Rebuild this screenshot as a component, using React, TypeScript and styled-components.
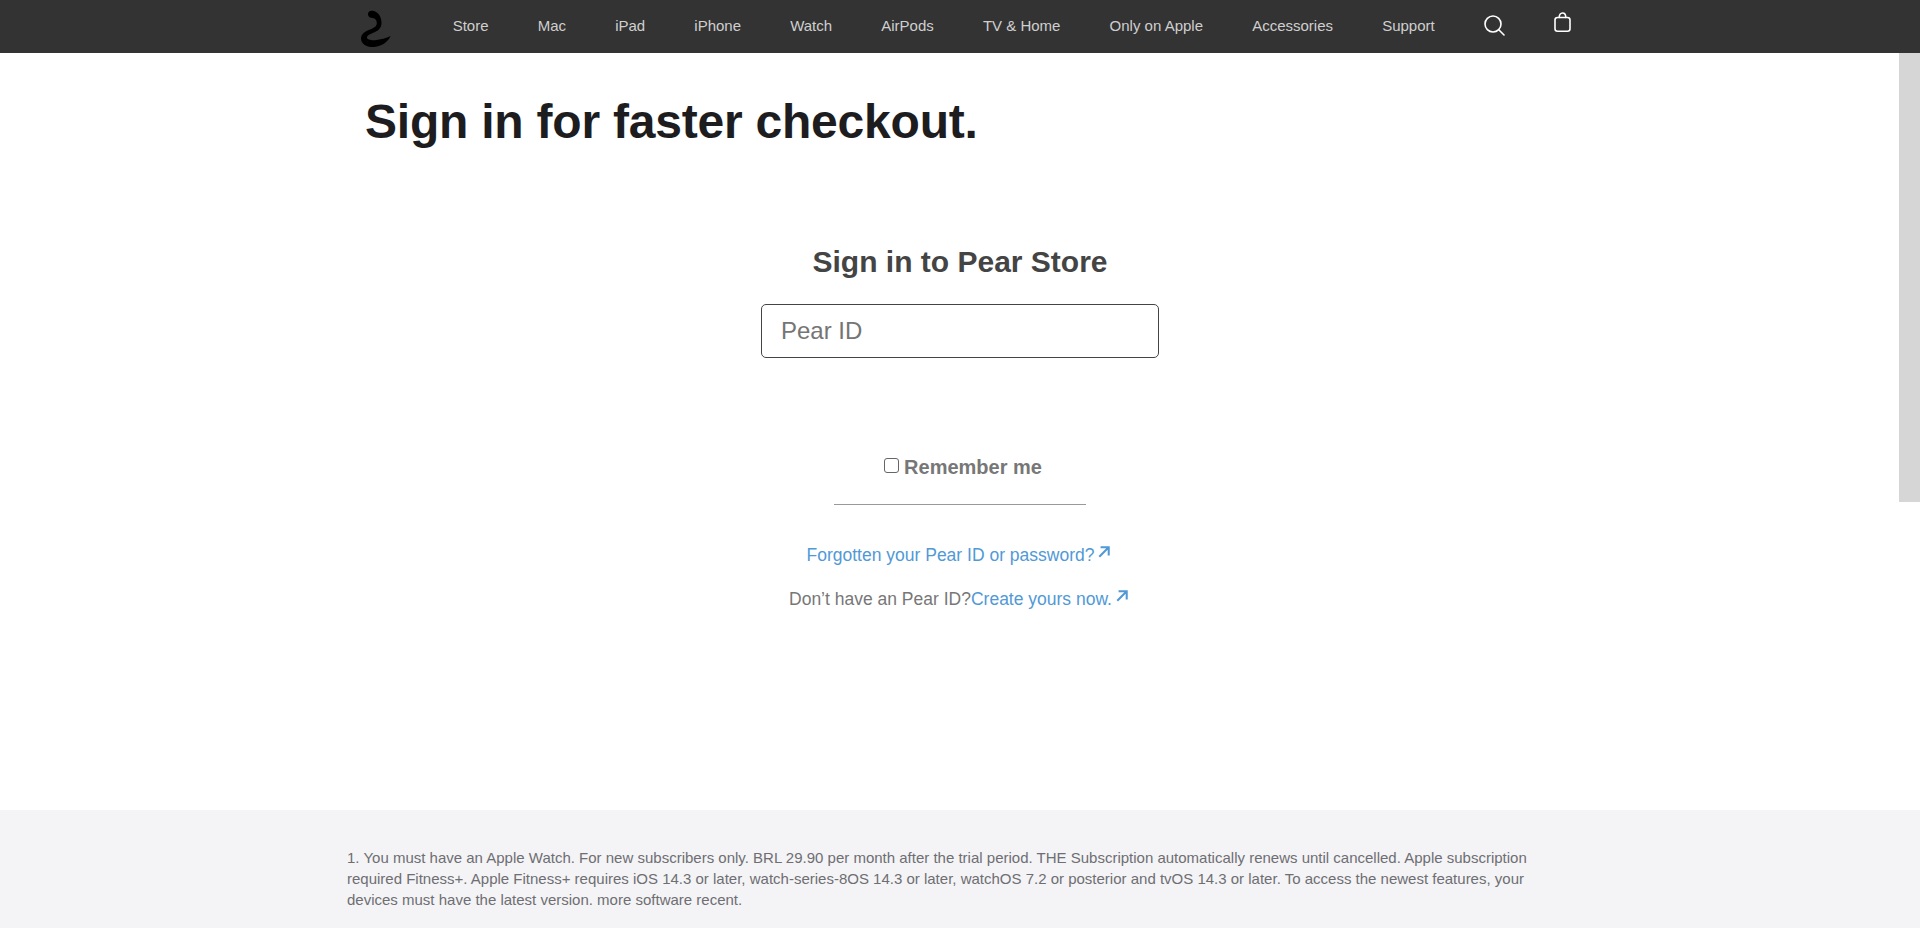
import styled, { createGlobalStyle } from "styled-components";

const links = [
  "Store",
  "Mac",
  "iPad",
  "iPhone",
  "Watch",
  "AirPods",
  "TV & Home",
  "Only on Apple",
  "Accessories",
  "Support",
];

const GlobalStyle = createGlobalStyle`
  html, body {
    margin: 0;
    height: 100%;
    overflow: hidden;
    background: #fff;
    font-family: "Liberation Sans", Arial, sans-serif;
  }
  * {
    box-sizing: border-box;
  }
`;

const Page = styled.div`
  position: relative;
  display: flex;
  flex-direction: column;
  height: 928px;
`;

const NavBar = styled.header`
  flex: none;
  height: 53px;
  padding-left: 360px;
  background: #333333;
`;

const NavList = styled.nav`
  display: flex;
  align-items: center;
  gap: 49.15px;
  height: 100%;
`;

const Logo = styled.svg`
  width: 32px;
  height: 40px;
  margin: 7px 11.500px 0 0;
  flex: none;
`;

const NavLink = styled.a`
  margin-top: -2px;
  font-size: 15px;
  color: #cfcfcf;
  white-space: nowrap;
`;

const NavIcon = styled.svg<{ $up: number }>`
  flex: none;
  margin-top: -${(p) => p.$up}px;
  fill: none;
  stroke: #fff;
  stroke-width: 1.6;
  stroke-linecap: round;
`;

const Scrollbar = styled.div`
  position: absolute;
  top: 53px;
  right: 0;
  width: 21px;
  height: 449px;
  background: #d6d6d6;
`;

const Main = styled.main`
  flex: 1;
  display: flex;
  flex-direction: column;
`;

const Headline = styled.h1`
  margin: 40px 0 0 365px;
  font-size: 48px;
  line-height: 58px;
  font-weight: 700;
  letter-spacing: -0.22px;
  color: #1d1d1f;
`;

const SignIn = styled.section`
  display: flex;
  flex-direction: column;
  align-items: center;
  margin-top: 93px;
`;

const SignInTitle = styled.h2`
  margin: 0;
  font-size: 30px;
  line-height: 36px;
  font-weight: 700;
  color: #444444;
`;

const IdInput = styled.input`
  width: 398px;
  height: 54px;
  margin-top: 24px;
  padding: 0 19px;
  border: 1px solid #444;
  border-radius: 5px;
  outline: none;
  font: 24px "Liberation Sans", Arial, sans-serif;
  color: #333;
  &::placeholder {
    color: #757575;
    opacity: 1;
  }
`;

const Remember = styled.label`
  display: flex;
  align-items: center;
  margin-top: 97px;
  font-size: 20px;
  line-height: 24px;
  font-weight: 700;
  color: #777777;
`;

const Check = styled.input`
  width: 15px;
  height: 15px;
  margin: 0 5px 3px 6px;
  appearance: none;
  border: 1px solid #666;
  border-radius: 3px;
  background: #fff;
`;

const Rule = styled.hr`
  width: 252px;
  height: 1px;
  margin: 25px 0 0;
  border: 0;
  background: #999;
`;

const HelpRow = styled.p<{ $top: number }>`
  display: flex;
  margin: ${(p) => p.$top}px 3px 0 0;
  font-size: 17.5px;
  line-height: 22px;
  color: #777777;
`;

const BlueLink = styled.a`
  color: #5199d6;
`;

const Arrow = styled.svg`
  width: 12px;
  height: 12px;
  margin: 2px 0 0 4px;
  fill: none;
  stroke: #5199d6;
  stroke-width: 2.4;
`;

const Footer = styled.footer`
  flex: none;
  height: 118px;
  padding: 37px 0 0 347px;
  background: #f4f4f6;
`;

const Note = styled.p`
  width: 1200px;
  margin: 0;
  font-size: 15px;
  line-height: 21px;
  color: #6e6e73;
`;

const ExternalArrow = () => (
  <Arrow viewBox="0 0 14 14">
    <path d="M3 1.5h9.5V11M12.5 1.5 1.5 12.5" />
  </Arrow>
);

export default function App() {
  return (
    <Page>
      <GlobalStyle />
      <NavBar>
        <NavList>
          <Logo viewBox="10 5 32 40">
            <path
              d="M18 9C18 6 21 5 24 6C28.500 7.500 31.500 12 31.500 18C31.500 23 28 26 24 27.500C20 29 17 30.500 17 32.500C17 34.500 21 35.500 25 35.200C31 34.700 36 33 40.700 31C38 36.500 32 41.500 24 42C17 42.500 11 39 11 33.500C11 29 15 26.500 20 24.500C24 22.800 26.800 21.500 26.800 18C26.800 15.500 25.500 13.500 23 13C20.500 13 18 12 18 9Z"
              fill="#000"
            />
          </Logo>
          {links.map((label) => (
            <NavLink key={label}>{label}</NavLink>
          ))}
          <NavIcon $up={3} width="21" height="21" viewBox="0 0 21 21">
            <circle cx="9" cy="9" r="8" />
            <path d="M14.800 14.800 20 20" />
          </NavIcon>
          <NavIcon $up={9} width="17" height="20" viewBox="0 0 17 20">
            <rect x="1" y="5.500" width="15" height="13.700" rx="2.500" />
            <path d="M5.200 5.500c0-2.800 1.300-4.500 3.300-4.500s3.300 1.700 3.300 4.500" />
          </NavIcon>
        </NavList>
      </NavBar>
      <Scrollbar />
      <Main>
        <Headline>Sign in for faster checkout.</Headline>
        <SignIn>
          <SignInTitle>Sign in to Pear Store</SignInTitle>
          <IdInput placeholder="Pear ID" />
          <Remember>
            <Check type="checkbox" />
            Remember me
          </Remember>
          <Rule />
          <HelpRow $top={39}>
            <BlueLink>Forgotten your Pear ID or password?</BlueLink>
            <ExternalArrow />
          </HelpRow>
          <HelpRow $top={22}>
            Don’t have an Pear ID?<BlueLink>Create yours now.</BlueLink>
            <ExternalArrow />
          </HelpRow>
        </SignIn>
      </Main>
      <Footer>
        <Note>
          1. You must have an Apple Watch. For new subscribers only. BRL 29.90 per month after the trial period. THE
          Subscription automatically renews until cancelled. Apple subscription required Fitness+. Apple Fitness+
          requires iOS 14.3 or later, watch-series-8OS 14.3 or later, watchOS 7.2 or posterior and tvOS 14.3 or later.
          To access the newest features, your devices must have the latest version. more software recent.
        </Note>
      </Footer>
    </Page>
  );
}
